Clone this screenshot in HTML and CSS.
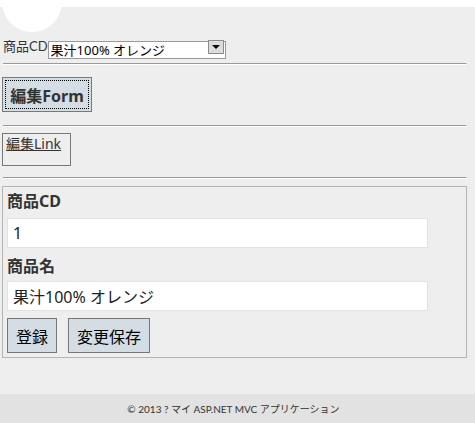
FILE: index.html
```html
<!DOCTYPE html>
<html lang="ja">
<head>
<meta charset="utf-8">
<title>編集</title>
<link rel="stylesheet" href="styles.css">
</head>
<body>
<header class="topbar"><span class="logo-circle"></span></header>
<main class="content">
  <div class="select-row">
    <label class="select-label" for="cd">商品CD</label>
    <div class="select-wrap">
      <select id="cd" class="select"><option>果汁100% オレンジ</option></select>
      <span class="select-arrow"><span class="tri"></span></span>
    </div>
  </div>
  <hr class="rule rule-1">
  <button class="btn-form" type="button">編集Form</button>
  <hr class="rule rule-2">
  <div class="link-box"><a class="edit-link" href="#">編集Link</a></div>
  <hr class="rule rule-3">
  <div class="fieldset">
    <div class="field-label label-1">商品CD</div>
    <input class="text-input" type="text" value="1">
    <div class="field-label label-2">商品名</div>
    <input class="text-input" type="text" value="果汁100% オレンジ">
    <div class="btn-row">
      <button class="btn" type="button">登録</button>
      <button class="btn" type="button">変更保存</button>
    </div>
  </div>
</main>
<footer class="footer">© 2013 ? マイ ASP.NET MVC アプリケーション</footer>
</body>
</html>
```
FILE: styles.css
```css
* { box-sizing: border-box; }
html, body { margin: 0; padding: 0; }
body {
  background: #eeeeee;
  color: #333;
  font-family: "Noto Sans", "Noto Sans CJK JP", sans-serif;
  overflow: hidden;
}
.topbar {
  position: relative;
  height: 7px;
  background: #fff;
}
.logo-circle {
  position: absolute;
  left: 2px;
  top: -28px;
  width: 60px;
  height: 60px;
  border-radius: 50%;
  background: #fff;
}
.content {
  padding: 0 9px 0 2px;
}
.select-row {
  display: flex;
  align-items: center;
  margin-top: 31px;
  height: 17px;
  padding-left: 1px;
}
.select-label {
  font-family: "Lato", "Noto Sans CJK JP", sans-serif;
  font-size: 13px;
  line-height: 17px;
  color: #333;
}
.select-wrap {
  position: relative;
  width: 178px;
  height: 18px;
}
.select {
  appearance: none;
  -webkit-appearance: none;
  width: 100%;
  height: 18px;
  margin: 0;
  border: 1px solid #9a9a9a;
  background: #fff;
  font-family: "Noto Sans", "Noto Sans CJK JP", sans-serif;
  font-size: 13px;
  line-height: 16px;
  padding: 0 0 0 2px;
  color: #000;
  border-radius: 0;
}
.select-arrow {
  position: absolute;
  right: 2px;
  top: 2px;
  width: 16px;
  height: 14px;
  background: #dcdcdc;
  border: 1px solid #8c8c8c;
  display: flex;
  align-items: center;
  justify-content: center;
  pointer-events: none;
}
.tri {
  width: 0;
  height: 0;
  border-left: 4px solid transparent;
  border-right: 4px solid transparent;
  border-top: 4px solid #000;
}
.rule {
  height: 2px;
  margin: 0;
  border: 0;
  border-top: 1px solid #9a9a9a;
  border-bottom: 1px solid #fff;
  border-right: 1px solid #fff;
  width: 464px;
  margin-left: 1px;
}
.rule-1 { margin-top: 8px; }
.rule-2 { margin-top: 13px; }
.rule-3 { margin-top: 11px; }
.btn-form {
  display: block;
  margin-top: 12px;
  width: 90px;
  height: 35px;
  background: #d4dde4;
  border: 1px solid #7a7a7a;
  outline: 1px dotted #000;
  outline-offset: -4px;
  font-family: "Noto Sans", "Noto Sans CJK JP", sans-serif;
  font-size: 16px;
  font-weight: bold;
  color: #333;
  padding: 0;
}
.link-box {
  margin-top: 6px;
  width: 69px;
  height: 33px;
  border: 1px solid #777;
  padding: 0 0 0 3px;
  font-size: 14px;
  line-height: 20px;
}
.edit-link {
  color: #333;
  text-decoration: underline;
}
.fieldset {
  margin-top: 7px;
  margin-left: 0;
  width: 465px;
  border: 1px solid #b4b4b4;
  padding: 0 4px 4px 4px;
}
.field-label {
  font-size: 16px;
  font-weight: bold;
  line-height: 22px;
  color: #333;
}
.label-1 { margin-top: 3px; }
.label-2 { margin-top: 7px; }
.text-input {
  display: block;
  width: 421px;
  height: 30px;
  margin-top: 6px;
  border: 1px solid #e2e2e2;
  background: #fff;
  padding: 0 5px;
  font-family: "Noto Sans", "Noto Sans CJK JP", sans-serif;
  font-size: 16px;
  color: #222;
}
.label-2 + .text-input { margin-top: 4px; }
.btn-row {
  display: flex;
  gap: 11px;
  margin-top: 7px;
}
.btn {
  height: 35px;
  padding: 0 8px;
  background: #d4dde4;
  border: 1px solid #777;
  font-family: "Noto Sans", "Noto Sans CJK JP", sans-serif;
  font-size: 16px;
  color: #000;
}
.footer {
  margin-top: 36px;
  height: 31px;
  background: #e2e2e2;
  font-family: "Lato", "Noto Sans CJK JP", sans-serif;
  font-size: 10px;
  line-height: 31px;
  text-align: center;
  padding-right: 8px;
  color: #333;
}
```
